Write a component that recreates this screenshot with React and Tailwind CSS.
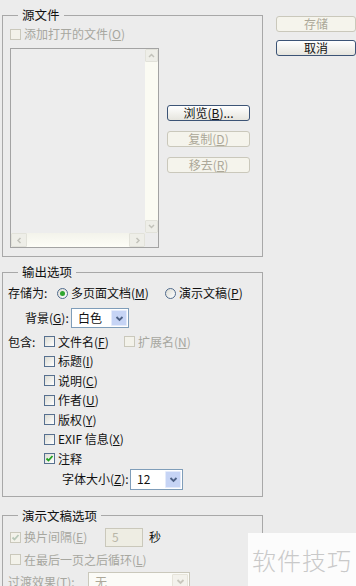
import React from "react";

const M = ({ c }) => <u className="underline underline-offset-[1px] decoration-[1px]">{c}</u>;

function Btn({ children, disabled }) {
  return (
    <div
      className={
        "w-full h-full flex items-center justify-center rounded-[3px] border text-[12px] leading-none " +
        (disabled
          ? "border-[#cac8bb] bg-[#f5f4ec] text-[#aca899]"
          : "border-[#3c5476] bg-gradient-to-b from-[#ffffff] to-[#e6e5de] text-[#111]")
      }
    >
      {children}
    </div>
  );
}

function Cb({ checked, disabled }) {
  return (
    <div
      className={
        "w-[11px] h-[11px] shrink-0 border flex items-center justify-center " +
        (disabled
          ? "border-[#cac8bb] bg-[#f3f2ea]"
          : "border-[#57708f] bg-gradient-to-br from-[#dcdcd4] to-[#ffffff]")
      }
    >
      {checked && (
        <svg width="9" height="9" viewBox="0 0 9 9">
          <path d="M1.5 4.5 L3.5 6.5 L7.5 2" stroke={disabled ? "#b8c8b8" : "#21a121"} strokeWidth="1.8" fill="none" />
        </svg>
      )}
    </div>
  );
}

function Radio({ checked }) {
  return (
    <div className="w-[11px] h-[11px] shrink-0 rounded-full border border-[#4f6a8c] bg-gradient-to-br from-[#dcdcd4] to-[#ffffff] flex items-center justify-center">
      {checked && <div className="w-[5px] h-[5px] rounded-full bg-[#2fa62f]" />}
    </div>
  );
}

function Chev({ color = "#4d6185" }) {
  return (
    <svg width="9" height="7" viewBox="0 0 9 7">
      <path d="M1.5 2 L4.5 5 L7.5 2" stroke={color} strokeWidth="1.8" fill="none" />
    </svg>
  );
}

function Select({ value, w, h, disabled }) {
  return (
    <div
      className={
        "flex items-stretch border " +
        (disabled ? "border-[#cac8bb] bg-[#fbfbf7]" : "border-[#7f9db9] bg-white")
      }
      style={{ width: w, height: h }}
    >
      <div className={"flex-1 flex items-center pl-[6px] text-[12px] " + (disabled ? "text-[#aca899]" : "text-[#111]")}>
        {value}
      </div>
      <div
        className={
          "w-[16px] m-[1px] flex items-center justify-center rounded-[1px] " +
          (disabled ? "bg-[#f3f2ec] border border-[#e6e4da]" : "bg-[#c6d4f5] border border-[#e4ebfb]")
        }
      >
        <Chev color={disabled ? "#c9c7bd" : "#4d6185"} />
      </div>
    </div>
  );
}

function ScrollBtn({ dir, w = 13, h = 13 }) {
  const paths = {
    up: "M2 6 L4.5 3.5 L7 6",
    down: "M2 3 L4.5 5.5 L7 3",
    left: "M5.5 2 L3 4.5 L5.5 7",
    right: "M3.5 2 L6 4.5 L3.5 7",
  };
  return (
    <div
      className="flex items-center justify-center bg-[#eeeee8] border border-[#e2e2da] rounded-[1px] shrink-0"
      style={{ width: w, height: h }}
    >
      <svg width="9" height="9" viewBox="0 0 9 9">
        <path d={paths[dir]} stroke="#c2c2ba" strokeWidth="1.5" fill="none" />
      </svg>
    </div>
  );
}

const Fs = ({ title, className = "", children }) => (
  <fieldset className={"border border-[#a8a8a8] p-0 m-0 min-w-0 w-[261px] " + className}>
    <legend className="ml-[15px] px-[4px] leading-[16px] text-[12.5px] text-[#111]">{title}</legend>
    {children}
  </fieldset>
);

export default function App() {
  const dis = "text-[#a7a7a0]";
  return (
    <div className="relative w-[356px] h-[586px] overflow-hidden bg-[#ececec] flex font-['Noto_Sans_CJK_SC',sans-serif] text-[12px] text-[#111] leading-none">
      <div className="ml-[2px] w-[261px] flex flex-col shrink-0">
        {/* 源文件 */}
        <Fs title="源文件" className="mt-[7px]">
          <div className="pl-[7px] pt-[3px] pb-[8px] flex gap-[8px]">
            <div className="flex flex-col">
              <div className="h-[16px] flex items-center gap-[3px]">
                <Cb disabled />
                <span className={dis}>
                  添加打开的文件(<M c="O" />)
                </span>
              </div>
              <div className="mt-[6px] w-[149px] h-[200px] border border-[#a3a3a3] flex flex-col">
                <div className="flex-1 flex min-h-0">
                  <div className="flex-1 bg-[#ededed]" />
                  <div className="w-[13px] bg-[#fbfbf3] flex flex-col justify-between">
                    <ScrollBtn dir="up" />
                    <ScrollBtn dir="down" />
                  </div>
                </div>
                <div className="h-[14px] flex shrink-0">
                  <div className="flex-1 bg-gradient-to-b from-[#f3f3eb] to-[#fdfdf7] flex justify-between">
                    <ScrollBtn dir="left" w={16} h={14} />
                    <ScrollBtn dir="right" w={16} h={14} />
                  </div>
                  <div className="w-[13px] bg-[#ececec]" />
                </div>
              </div>
            </div>
            <div className="pt-[79px] flex flex-col gap-[10px]">
              <div className="w-[83px] h-[16px]">
                <Btn>
                  浏览(<M c="B" />)...
                </Btn>
              </div>
              <div className="w-[83px] h-[16px]">
                <Btn disabled>
                  复制(<M c="D" />)
                </Btn>
              </div>
              <div className="w-[83px] h-[16px]">
                <Btn disabled>
                  移去(<M c="R" />)
                </Btn>
              </div>
            </div>
          </div>
        </Fs>

        {/* 输出选项 */}
        <Fs title="输出选项" className="mt-[7px]">
          <div className="pl-[5px] pt-[5px] pb-[6px] flex flex-col">
            <div className="h-[16px] flex items-center">
              <span className="w-[49px]">存储为:</span>
              <div className="w-[108px] flex items-center gap-[3px]">
                <Radio checked />
                <span>
                  多页面文档(<M c="M" />)
                </span>
              </div>
              <div className="flex items-center gap-[3px]">
                <Radio />
                <span>
                  演示文稿(<M c="P" />)
                </span>
              </div>
            </div>
            <div className="mt-[7px] h-[20px] flex items-center">
              <span className="ml-[17px] w-[46px]">
                背景(<M c="G" />):
              </span>
              <Select value="白色" w={58} h={20} />
            </div>
            <div className="mt-[4px] h-[19.5px] flex items-center">
              <span className="w-[36px]">包含:</span>
              <div className="w-[80px] flex items-center gap-[3px]">
                <Cb />
                <span>
                  文件名(<M c="F" />)
                </span>
              </div>
              <div className="flex items-center gap-[3px]">
                <Cb disabled />
                <span className={dis}>
                  扩展名(<M c="N" />)
                </span>
              </div>
            </div>
            {[
              ["标题", "I", false],
              ["说明", "C", false],
              ["作者", "U", false],
              ["版权", "Y", false],
              ["EXIF 信息", "X", false],
              ["注释", null, true],
            ].map(([t, k, c]) => (
              <div key={t} className="h-[19.5px] flex items-center gap-[3px] pl-[36px]">
                <Cb checked={c} />
                <span>
                  {t}
                  {k && (
                    <>
                      (<M c={k} />)
                    </>
                  )}
                </span>
              </div>
            ))}
            <div className="h-[21px] flex items-center">
              <span className="ml-[54px] w-[68px]">
                字体大小(<M c="Z" />):
              </span>
              <Select value="12" w={53} h={21} />
            </div>
          </div>
        </Fs>

        {/* 演示文稿选项 */}
        <Fs title="演示文稿选项" className="mt-[11px]">
          <div className="pl-[5px] pt-[4px] flex flex-col">
            <div className="h-[19px] flex items-center">
              <div className="ml-[2px] w-[95px] flex items-center gap-[3px]">
                <Cb checked disabled />
                <span className={dis}>
                  换片间隔(<M c="E" />)
                </span>
              </div>
              <div className="w-[38px] h-[19px] border border-[#cac8bb] bg-[#eeede3] flex items-center pl-[6px] text-[#b8b6a8]">
                5
              </div>
              <span className="ml-[6px]">秒</span>
            </div>
            <div className="mt-[4px] h-[18px] flex items-center gap-[3px] ml-[2px]">
              <Cb disabled />
              <span className={dis}>
                在最后一页之后循环(<M c="L" />)
              </span>
            </div>
            <div className="mt-[3px] h-[20px] flex items-center">
              <span className={"w-[80px] " + dis}>
                过渡效果(<M c="T" />):
              </span>
              <Select value="无" w={102} h={20} disabled />
            </div>
          </div>
        </Fs>
      </div>

      <div className="ml-[13px] pt-[16px] flex flex-col gap-[8px]">
        <div className="w-[80px] h-[16px]">
          <Btn disabled>存储</Btn>
        </div>
        <div className="w-[80px] h-[16px]">
          <Btn>取消</Btn>
        </div>
      </div>

      <div className="absolute left-[248px] top-[533px] w-[108px] h-[53px] bg-[#fcfcfc] flex items-center justify-center">
        <span className="text-[24px] tracking-[1px] text-[#c9c9c9] font-light leading-none">软件技巧</span>
      </div>
    </div>
  );
}
